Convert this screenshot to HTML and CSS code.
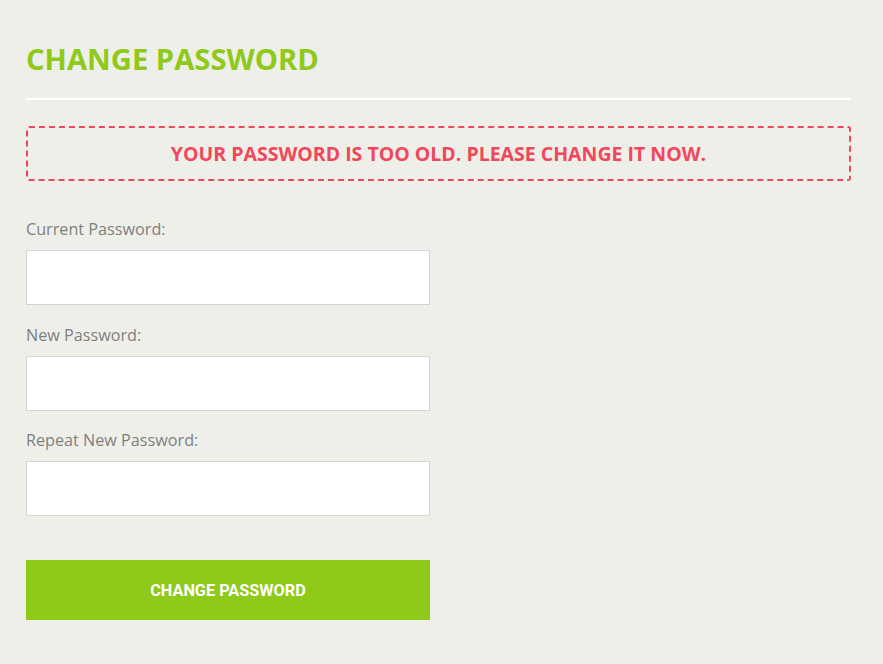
FILE: index.html
```html
<!DOCTYPE html>
<html>
<head>
<meta charset="utf-8">
<link rel="stylesheet" href="styles.css">
</head>
<body>
<main class="page">
  <h1 class="title">CHANGE PASSWORD</h1>
  <div class="alert">YOUR PASSWORD IS TOO OLD. PLEASE CHANGE IT NOW.</div>
  <form class="form">
    <label class="field">
      <span class="label">Current Password:</span>
      <input class="input" type="password">
    </label>
    <label class="field">
      <span class="label">New Password:</span>
      <input class="input" type="password">
    </label>
    <label class="field">
      <span class="label">Repeat New Password:</span>
      <input class="input" type="password">
    </label>
    <button class="btn" type="button">CHANGE PASSWORD</button>
  </form>
</main>
</body>
</html>
```
FILE: styles.css
```css
html, body {
  margin: 0;
  padding: 0;
  background: #efefea;
}
.page {
  padding: 38px 32px 40px 26px;
  font-family: "Open Sans", sans-serif;
}
.title {
  margin: 0;
  font-size: 29.2px;
  font-weight: 700;
  color: #8fc919;
  line-height: 42px;
  padding-bottom: 18px;
  border-bottom: 2px solid #ffffff;
}
.alert {
  margin-top: 26px;
  height: 51px;
  border: 2px dashed #f2475a;
  border-radius: 3px;
  display: flex;
  align-items: center;
  justify-content: center;
  color: #f2475a;
  font-weight: 700;
  font-size: 19.5px;
}
.form {
  margin-top: 37px;
  width: 404px;
  display: flex;
  flex-direction: column;
}
.field {
  display: flex;
  flex-direction: column;
  margin-bottom: 18.5px;
}
.label {
  font-size: 16.2px;
  color: #7f7f7f;
  line-height: 22px;
  margin-bottom: 10px;
}
.input {
  box-sizing: border-box;
  height: 55px;
  margin: 0;
  border: 1px solid #d5d5d5;
  background: #ffffff;
  outline: none;
}
.btn {
  margin-top: 25.5px;
  height: 60px;
  border: none;
  background: #8fc919;
  color: #ffffff;
  font-family: Roboto, sans-serif;
  font-weight: 700;
  font-size: 16.3px;
  cursor: pointer;
}
```
